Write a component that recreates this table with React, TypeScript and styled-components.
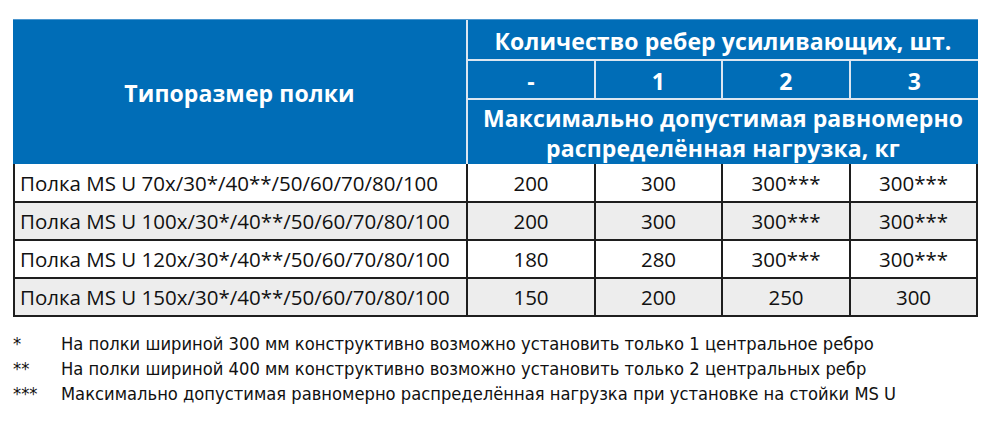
import React from "react";
import styled, { createGlobalStyle } from "styled-components";

const Global = createGlobalStyle`
  html, body { margin: 0; padding: 0; background: #ffffff; }
  body { width: 991px; height: 428px; overflow: hidden; }
`;

const Page = styled.div`
  padding: 19px 0 0 13px;
  width: 965px;
  font-family: "Open Sans", "Noto Sans", sans-serif;
`;

const Header = styled.div`
  display: grid;
  grid-template-columns: 453px 126px 125px 126px 127px;
  grid-template-rows: 39px 37px 64px;
  gap: 2px;
  background: #dbe6f1;
  border-top: 1px solid #4d97cf;
`;

const HCell = styled.div<{ $col?: string; $row?: string }>`
  background: #006db7;
  color: #ffffff;
  font-weight: 700;
  font-size: 23px;
  line-height: 28px;
  letter-spacing: 0.1px;
  display: flex;
  flex-direction: column;
  align-items: center;
  justify-content: center;
  text-align: center;
  white-space: nowrap;
  padding-top: 2px;
  grid-column: ${(p) => p.$col || "auto"};
  grid-row: ${(p) => p.$row || "auto"};
`;

const HLine = styled.span`
  display: block;
  line-height: 30px;
`;

const Body = styled.div`
  display: grid;
  grid-template-columns: 451px 126px 125px 126px 125px;
  grid-auto-rows: 37px 36px 36px 36px;
  gap: 2px;
  padding: 0 2px 2px 2px;
  background: #1e1e1e;
`;

const Cell = styled.div<{ $alt: boolean; $left?: boolean }>`
  background: ${(p) => (p.$alt ? "#ededed" : "#ffffff")};
  color: #111111;
  font-size: 20.5px;
  display: flex;
  align-items: center;
  justify-content: ${(p) => (p.$left ? "flex-start" : "center")};
  padding-left: ${(p) => (p.$left ? "5px" : "0")};
  white-space: nowrap;
`;

const Notes = styled.div`
  margin: 14px 0 0 0;
  display: flex;
  flex-direction: column;
  font-family: "DejaVu Sans Condensed", "Liberation Sans Narrow", "Liberation Sans", sans-serif;
  font-size: 18.2px;
  color: #111111;
`;

const Note = styled.div`
  display: flex;
  align-items: baseline;
  line-height: 25px;
  white-space: nowrap;
`;

const Mark = styled.span`
  width: 48px;
  flex: none;
`;

const rows: string[][] = [
  ["Полка MS U 70x/30*/40**/50/60/70/80/100", "200", "300", "300***", "300***"],
  ["Полка MS U 100x/30*/40**/50/60/70/80/100", "200", "300", "300***", "300***"],
  ["Полка MS U 120x/30*/40**/50/60/70/80/100", "180", "280", "300***", "300***"],
  ["Полка MS U 150x/30*/40**/50/60/70/80/100", "150", "200", "250", "300"],
];

const notes: [string, string][] = [
  ["*", "На полки шириной 300 мм конструктивно возможно установить только 1 центральное ребро"],
  ["**", "На полки шириной 400 мм конструктивно возможно установить только 2 центральных ребр"],
  ["***", "Максимально допустимая равномерно распределённая нагрузка при установке на стойки MS U"],
];

export default function App() {
  return (
    <Page>
      <Global />
      <Header>
        <HCell $col="1" $row="1 / 4">Типоразмер полки</HCell>
        <HCell $col="2 / 6" $row="1">Количество ребер усиливающих, шт.</HCell>
        <HCell $col="2" $row="2">-</HCell>
        <HCell $col="3" $row="2">1</HCell>
        <HCell $col="4" $row="2">2</HCell>
        <HCell $col="5" $row="2">3</HCell>
        <HCell $col="2 / 6" $row="3">
          <HLine>Максимально допустимая равномерно</HLine>
          <HLine>распределённая нагрузка, кг</HLine>
        </HCell>
      </Header>
      <Body>
        {rows.map((r, i) =>
          r.map((c, j) => (
            <Cell key={`${i}-${j}`} $alt={i % 2 === 1} $left={j === 0}>
              {c}
            </Cell>
          ))
        )}
      </Body>
      <Notes>
        {notes.map(([m, t]) => (
          <Note key={m}>
            <Mark>{m}</Mark>
            <span>{t}</span>
          </Note>
        ))}
      </Notes>
    </Page>
  );
}
